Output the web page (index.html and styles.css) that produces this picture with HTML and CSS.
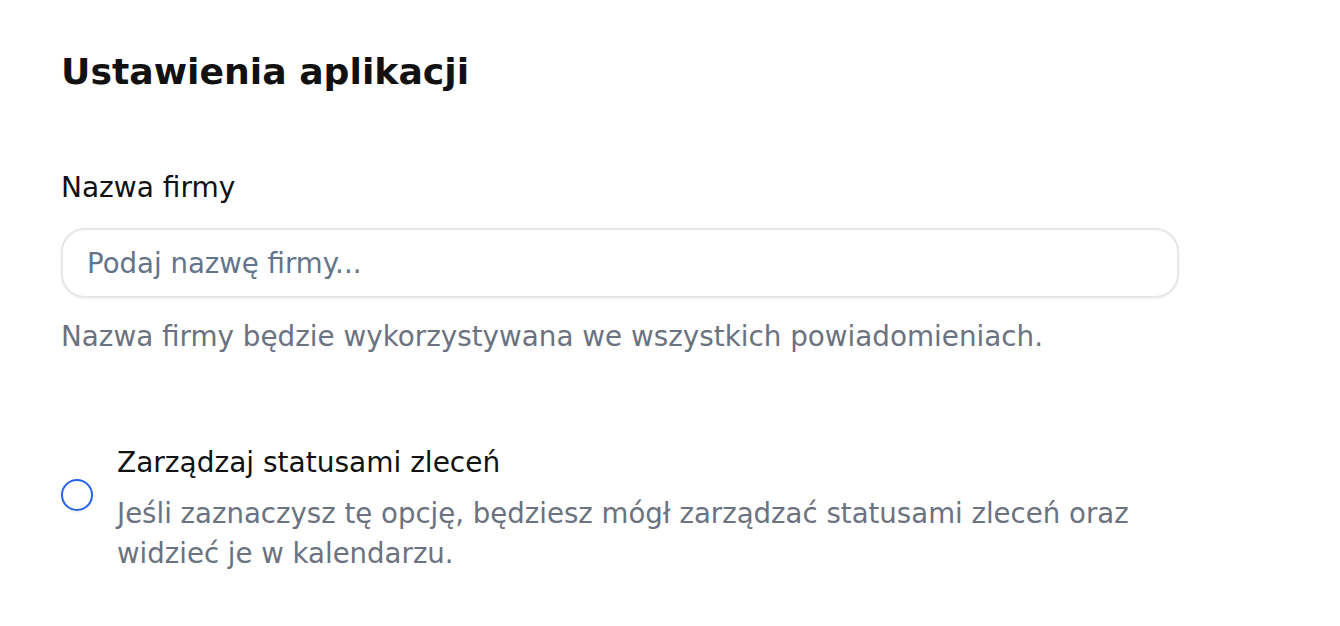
FILE: index.html
```html
<!DOCTYPE html>
<html lang="pl">
<head>
<meta charset="utf-8">
<title>Ustawienia aplikacji</title>
<link rel="stylesheet" href="styles.css">
</head>
<body>
<main class="page">
  <h1 class="title">Ustawienia aplikacji</h1>
  <div class="field">
    <label class="label" for="company">Nazwa firmy</label>
    <input class="input" id="company" type="text" placeholder="Podaj nazwę firmy...">
    <p class="help">Nazwa firmy będzie wykorzystywana we wszystkich powiadomieniach.</p>
  </div>
  <div class="option">
    <span class="radio"></span>
    <div class="option-text">
      <div class="option-title">Zarządzaj statusami zleceń</div>
      <p class="option-desc">Jeśli zaznaczysz tę opcję, będziesz mógł zarządzać statusami zleceń oraz<br>widzieć je w kalendarzu.</p>
    </div>
  </div>
</main>
</body>
</html>
```
FILE: styles.css
```css
* { box-sizing: border-box; }
html, body { margin: 0; background: #fff; }
body { font-family: "DejaVu Sans", "Noto Sans", sans-serif; color: #111; }
.page { padding: 50px 0 0 61px; width: 1179px; }
.title { margin: 0; font-size: 36.2px; line-height: 44px; font-weight: 700; color: #111; }
.field { margin-top: 76px; display: flex; flex-direction: column; }
.label { font-size: 28px; line-height: 36px; font-weight: 400; color: #111; }
.input { margin-top: 22px; height: 70px; width: 100%; border: 2px solid #e5e7eb; border-radius: 24px; padding: 0 24px; font-family: inherit; font-size: 27.6px; color: #111; box-shadow: 0 1px 3px rgba(0,0,0,0.06); outline: none; background: #fff; }
.input::placeholder { color: #64748b; opacity: 1; }
.help { margin: 21px 0 0; font-size: 27.8px; line-height: 36px; color: #6b7280; }
.option { margin-top: 90px; display: flex; align-items: flex-start; gap: 24px; }
.radio { flex: none; margin-top: 34px; width: 32px; height: 32px; border: 2px solid #2563eb; border-radius: 50%; background: #fff; box-shadow: 0 1px 3px rgba(0,0,0,0.08); }
.option-text { display: flex; flex-direction: column; }
.option-title { font-size: 28px; line-height: 36px; font-weight: 400; color: #111; }
.option-desc { margin: 13px 0 0; font-size: 27.6px; line-height: 40px; color: #6b7280; }
```
